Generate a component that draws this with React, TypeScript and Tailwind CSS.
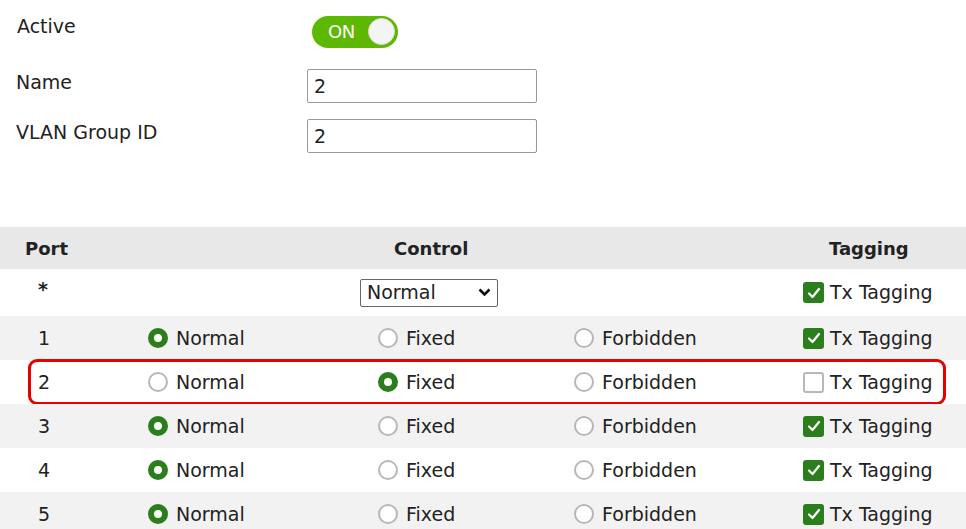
import React from "react";

// ─── Types ────────────────────────────────────────────────────────────────────

type Control = "normal" | "fixed" | "forbidden";

type PortRow = {
  port: number;
  control: Control;
  tagging: boolean;
};

const ROWS: PortRow[] = [
  { port: 1, control: "normal", tagging: true },
  { port: 2, control: "fixed", tagging: false },
  { port: 3, control: "normal", tagging: true },
  { port: 4, control: "normal", tagging: true },
  { port: 5, control: "normal", tagging: true },
];

const FONT = { fontFamily: '"DejaVu Sans", "Liberation Sans", sans-serif' };

// ─── Bits ─────────────────────────────────────────────────────────────────────

const Radio = ({ on }: { on: boolean }) =>
  on ? (
    <span className="inline-block w-[20px] h-[20px] rounded-full border-[6px] border-[#2a7e1c] bg-white shrink-0" />
  ) : (
    <span className="inline-block w-[20px] h-[20px] rounded-full border-2 border-[#b8b8b8] bg-white shrink-0" />
  );

const Check = ({ on }: { on: boolean }) =>
  on ? (
    <span className="inline-flex items-center justify-center w-[21px] h-[21px] rounded-[3px] bg-[#2a7e1c] shrink-0">
      <svg width="14" height="12" viewBox="0 0 14 12">
        <path d="M2 6.5 L5.5 10 L12 2" fill="none" stroke="white" strokeWidth="2.2" strokeLinecap="round" strokeLinejoin="round" />
      </svg>
    </span>
  ) : (
    <span className="inline-block w-[21px] h-[21px] rounded-[3px] border-2 border-[#b8b8b8] bg-white shrink-0" />
  );

const Option = ({ on, label }: { on: boolean; label: string }) => (
  <div className="flex items-center gap-[8px]">
    <Radio on={on} />
    <span>{label}</span>
  </div>
);

const Tagging = ({ on }: { on: boolean }) => (
  <div className="flex items-center gap-[6px]">
    <Check on={on} />
    <span>Tx Tagging</span>
  </div>
);

// ─── App ──────────────────────────────────────────────────────────────────────

export default function App() {
  return (
    <div className="w-[966px] h-[529px] bg-white overflow-hidden text-[#222] text-[19px]" style={FONT}>
      {/* Form */}
      <div className="pt-[15px]">
        <div className="flex items-center h-[33px]">
          <div className="w-[312px] pl-[17px] -mt-[10px]">Active</div>
          <div className="flex items-center w-[86px] h-[32px] rounded-full bg-[#5cb800] pl-[16px] pr-[3px]">
            <span className="text-white text-[18px] tracking-[-0.5px]">ON</span>
            <span className="ml-auto w-[27px] h-[27px] rounded-full bg-[#f4f4f4] border border-[#dcdcdc]" />
          </div>
        </div>
        <div className="flex items-center h-[34px] mt-[21px]">
          <div className="w-[307px] pl-[16px] -mt-[7px]">Name</div>
          <div className="w-[230px] h-[34px] border border-[#999] rounded-[2px] flex items-center pl-[6px]">2</div>
        </div>
        <div className="flex items-center h-[34px] mt-[16px]">
          <div className="w-[307px] pl-[16px] -mt-[7px]">VLAN Group ID</div>
          <div className="w-[230px] h-[34px] border border-[#999] rounded-[2px] flex items-center pl-[6px]">2</div>
        </div>
      </div>

      {/* Table */}
      <div className="mt-[74px]">
        <div className="flex items-center h-[42px] bg-[#e8e8e8] font-bold text-[18px]">
          <div className="w-[394px] pl-[25px]">Port</div>
          <div className="w-[435px]">Control</div>
          <div>Tagging</div>
        </div>

        <div className="flex items-center h-[47px] bg-white">
          <div className="w-[360px] pl-[38px] pb-[6px] font-bold">*</div>
          <div className="w-[443px]">
            <div className="flex items-center w-[138px] h-[28px] border border-[#666] rounded-[2px] pl-[6px] pr-[6px]">
              <span>Normal</span>
              <svg className="ml-auto" width="13" height="9" viewBox="0 0 13 9">
                <path d="M1.5 1.5 L6.5 6.5 L11.5 1.5" fill="none" stroke="#111" strokeWidth="2.6" />
              </svg>
            </div>
          </div>
          <Tagging on />
        </div>

        {ROWS.map((r, i) => (
          <div
            key={r.port}
            className={`relative flex items-center h-[44px] ${i % 2 === 0 ? "bg-[#f2f2f2]" : "bg-white"}`}
          >
            <div className="w-[148px] pl-[38px]">{r.port}</div>
            <div className="w-[230px]">
              <Option on={r.control === "normal"} label="Normal" />
            </div>
            <div className="w-[196px]">
              <Option on={r.control === "fixed"} label="Fixed" />
            </div>
            <div className="w-[229px]">
              <Option on={r.control === "forbidden"} label="Forbidden" />
            </div>
            <Tagging on={r.tagging} />
            {r.port === 2 && (
              <span className="absolute left-[28px] w-[918px] -top-[1px] h-[46px] border-[3px] border-[#e60000] rounded-[9px] pointer-events-none" />
            )}
          </div>
        ))}
      </div>
    </div>
  );
}
